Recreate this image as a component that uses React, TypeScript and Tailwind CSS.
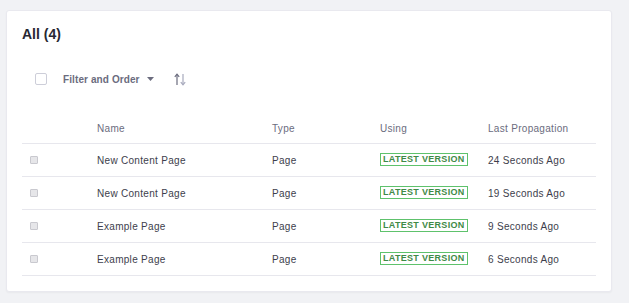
import React from "react";

const rows = [
  { name: "New Content Page", type: "Page", last: "24 Seconds Ago" },
  { name: "New Content Page", type: "Page", last: "19 Seconds Ago" },
  { name: "Example Page", type: "Page", last: "9 Seconds Ago" },
  { name: "Example Page", type: "Page", last: "6 Seconds Ago" },
];

export default function App() {
  return (
    <div
      className="w-[629px] h-[303px] bg-[#f1f2f5] pt-[10px] pl-[6px]"
      style={{ fontFamily: '"Liberation Sans", Arial, sans-serif' }}
    >
      <div className="w-[606px] h-[282px] bg-white rounded-[3px] border border-[#e9e9ef] shadow-[0_1px_2px_rgba(0,0,0,0.04)] px-[15px] pt-[13px]">
        <div className="h-[20px] flex items-center text-[14px] font-bold text-[#272833]">
          All (4)
        </div>
        <div className="mt-[19px] h-[32px] flex items-center">
          <div className="ml-[13px] w-[12px] h-[12px] border border-[#cdced9] rounded-[2px] bg-white" />
          <div className="ml-[16px] flex items-center text-[10px] font-bold text-[#6b6c7e] tracking-[0.1px]">
            Filter and Order
            <svg width="7" height="4" viewBox="0 0 7 4" className="ml-[7px]">
              <path d="M0 0 L7 0 L3.5 4 Z" fill="#6b6c7e" />
            </svg>
          </div>
          <svg width="12" height="13" viewBox="0 0 12 13" className="ml-[20px]">
            <path d="M3 1.5 V12" stroke="#6b6c7e" strokeWidth="1.2" />
            <path d="M0.8 3.8 L3 1.2 L5.2 3.8" stroke="#6b6c7e" strokeWidth="1.2" fill="none" />
            <path d="M9 1 V11.5" stroke="#a7a9bc" strokeWidth="1.2" />
            <path d="M6.8 9.2 L9 11.8 L11.2 9.2" stroke="#a7a9bc" strokeWidth="1.2" fill="none" />
          </svg>
        </div>
        <div className="mt-[18px]">
          <div className="grid grid-cols-[75px_175px_108px_108px_1fr] h-[31px] items-center border-b border-[#e7e7ed] text-[10px] tracking-[0.3px] text-[#6b6c7e]">
            <div />
            <div>Name</div>
            <div>Type</div>
            <div>Using</div>
            <div>Last Propagation</div>
          </div>
          {rows.map((r, i) => (
            <div
              key={i}
              className="grid grid-cols-[75px_175px_108px_108px_1fr] h-[33px] items-center border-b border-[#e7e7ed] text-[10px] tracking-[0.3px] text-[#3d3e4c]"
            >
              <div className="pl-[8px]">
                <div className="w-[8px] h-[8px] border border-[#c9c9cf] bg-[#e6e6e9] rounded-[1px]" />
              </div>
              <div>{r.name}</div>
              <div>{r.type}</div>
              <div className="flex items-center pb-[1px]">
                <span className="inline-flex items-center h-[13px] px-[2px] border border-[#5ec26c] text-[9px] font-bold tracking-[0.3px] text-[#3f8a47] leading-none">
                  LATEST VERSION
                </span>
              </div>
              <div>{r.last}</div>
            </div>
          ))}
        </div>
      </div>
    </div>
  );
}
